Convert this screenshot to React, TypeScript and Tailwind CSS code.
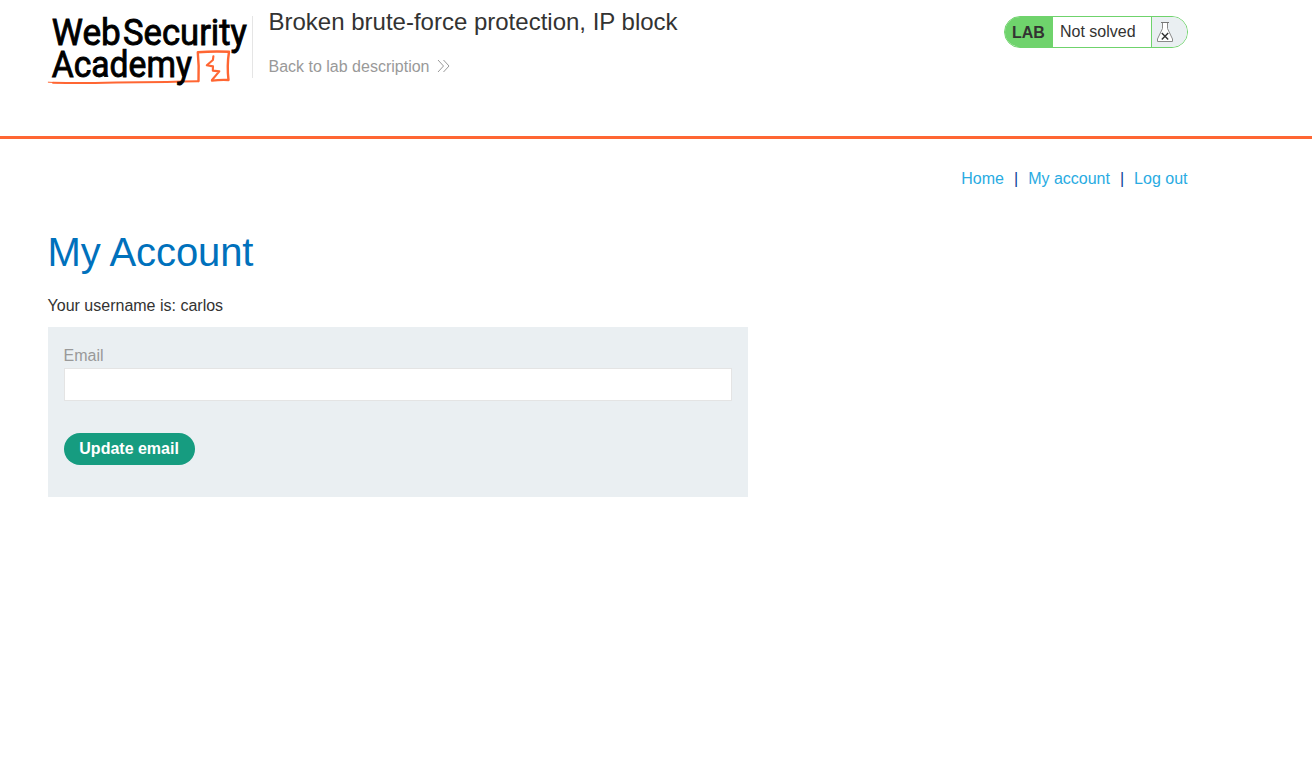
import React from "react";

function Logo() {
  return (
    <svg width="204" height="76" viewBox="48 12 204 76" className="block overflow-visible" role="img" aria-label="Web Security Academy">
      <g fill="none" stroke="#ff6633" strokeLinejoin="round" strokeLinecap="round">
        <path d="M53 82.7 Q75 83.3 95 82.9 T140 82.3 T198.3 81.3" strokeWidth="2" />
        <path d="M48.3 82.2 L58 82.7" strokeWidth="1" />
        <path d="M198.5 81 Q199.2 66 197.8 52.3 Q213 51 229 51.8 Q226.8 66 228.5 80 Q220 79.6 212 80.6" strokeWidth="2.4" />
        <path d="M213.4 56.2 L212.9 60 L206.8 65.2 L213 66.4 L212.8 70.6 L219.3 71.4 L212 80" strokeWidth="2.1" />
      </g>
      <g fill="#000" stroke="#000" strokeWidth="0.9" fontFamily="Roboto, sans-serif" fontWeight="400" fontSize="37.5">
        <text x="51.8" y="44.5" textLength="69" lengthAdjust="spacingAndGlyphs">Web</text>
        <text x="123" y="44.5" textLength="124" lengthAdjust="spacingAndGlyphs">Security</text>
        <text x="51.8" y="76.9" textLength="140" lengthAdjust="spacingAndGlyphs">Academy</text>
      </g>
    </svg>
  );
}

function Flask() {
  return (
    <svg width="18" height="22" viewBox="1156 21 18 22" className="block">
      <path d="M1162.5 22.5 V28.5 L1157.5 39 V41.5 H1172.5 V39 L1167.5 28.5 V22.5 Z" fill="#fff" stroke="#8a8a8a" />
      <path d="M1161 22.5 H1169" stroke="#777" />
      <path d="M1161.8 33 L1168.2 39.4 M1168.2 33 L1161.8 39.4" stroke="#333" strokeWidth="1.4" />
    </svg>
  );
}

export default function App() {
  return (
    <div className="min-h-[778px] bg-white text-base leading-[18px] text-[#333332] [font-family:'Liberation_Sans',Arial,sans-serif]">
      <header className="flex h-[139px] items-start justify-between border-b-3 border-[#ff6633] pr-[124px] pl-12">
        <div className="flex">
          <div className="mt-3">
            <Logo />
          </div>
          <div className="mt-4 h-[62px] w-px bg-[#e5e5e5]" />
          <div className="ml-[15.5px] pt-2">
            <h1 className="text-2xl leading-7">Broken brute-force protection, IP block</h1>
            <a href="#" className="mt-[22px] flex items-start text-[#999999]">
              Back to lab description
              <svg width="13" height="14" viewBox="0 0 13 14" className="mt-px ml-2" fill="none" stroke="#999999">
                <path d="M1 1 L6.5 7 L1 13 M6.5 1 L12 7 L6.5 13" />
              </svg>
            </a>
          </div>
        </div>
        <div className="mt-4 flex h-8 w-[184px] overflow-hidden rounded-2xl border border-[#6fd36c] bg-white">
          <div className="flex w-12 items-center pl-[7px] font-bold bg-[#6fd36c]">
            <span className="pt-0.5">LAB</span>
          </div>
          <div className="flex w-[98px] items-center pl-[7px]">
            <p>Not solved</p>
          </div>
          <div className="flex flex-1 border-l border-[#6fd36c] bg-[#eaeff2] pt-1 pl-1">
            <Flask />
          </div>
        </div>
      </header>
      <main className="pl-[47.6px]">
        <nav className="flex h-[79px] justify-end pt-[31px] pr-[124.5px] text-[#29abe2]">
          <a href="#">Home</a>
          <span className="mx-[10px] text-[#0b4594]">|</span>
          <a href="#">My account</a>
          <span className="mx-[10px] text-[#0b4594]">|</span>
          <a href="#">Log out</a>
        </nav>
        <h2 className="mt-[11px] text-[40px] leading-[46px] tracking-[-0.1px] text-[#0071bc]">My Account</h2>
        <p className="mt-[22px]">Your username is: carlos</p>
        <form className="mt-3 h-[170px] w-[700px] bg-[#eaeff2] px-4 pt-5">
          <label htmlFor="email" className="block text-[#999999]">Email</label>
          <input id="email" type="email" className="mt-[3px] block h-[33px] w-full border border-[#e4e4e4] bg-white px-2 outline-none" />
          <button type="button" className="mt-8 flex h-8 w-[131px] items-center justify-center rounded-2xl bg-[#169c80] font-bold text-white">
            Update email
          </button>
        </form>
      </main>
    </div>
  );
}
